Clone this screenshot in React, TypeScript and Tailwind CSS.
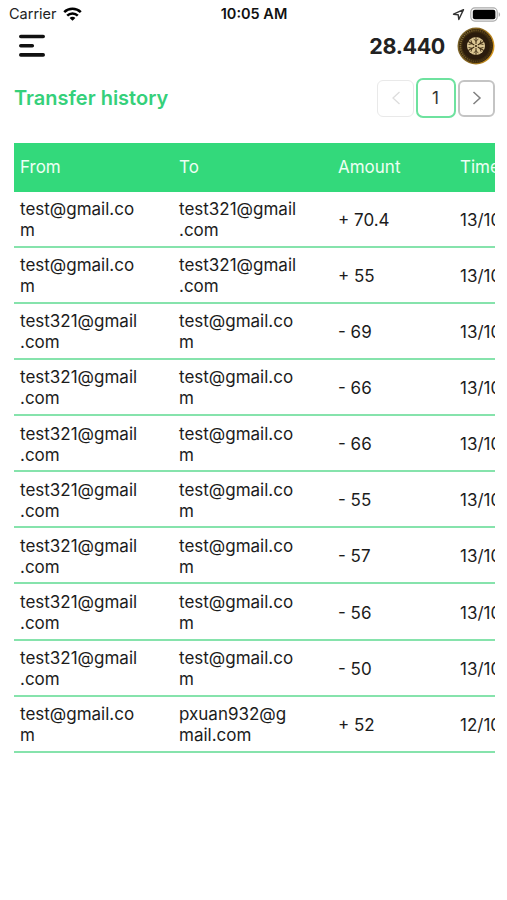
type Transfer = {
  from: string;
  to: string;
  amount: string;
  time: string;
};

const A = "test@gmail.com";
const B = "test321@gmail.com";

const transfers: Transfer[] = [
  { from: A, to: B, amount: "+ 70.4", time: "13/10" },
  { from: A, to: B, amount: "+ 55", time: "13/10" },
  { from: B, to: A, amount: "- 69", time: "13/10" },
  { from: B, to: A, amount: "- 66", time: "13/10" },
  { from: B, to: A, amount: "- 66", time: "13/10" },
  { from: B, to: A, amount: "- 55", time: "13/10" },
  { from: B, to: A, amount: "- 57", time: "13/10" },
  { from: B, to: A, amount: "- 56", time: "13/10" },
  { from: B, to: A, amount: "- 50", time: "13/10" },
  { from: A, to: "pxuan932@gmail.com", amount: "+ 52", time: "12/10" },
];

function StatusBar() {
  return (
    <div className="grid h-7 grid-cols-3 items-center pl-[9px] pr-[6px] text-[14.5px] leading-none">
      <div className="flex items-center gap-[6px]">
        <span className="text-[#222]">Carrier</span>
        <svg width="19" height="14" viewBox="0 0 19 14" fill="none" stroke="#000" strokeWidth="2.5">
          <path d="M1.2 5.2a11.8 11.8 0 0 1 16.6 0" />
          <path d="M4.2 8.6a7.5 7.5 0 0 1 10.6 0" />
          <path d="M9.5 13.8 6.6 10.9a4 4 0 0 1 5.8 0Z" fill="#000" stroke="none" />
        </svg>
      </div>
      <div className="pr-[2px] text-center font-semibold text-[#111]">10:05 AM</div>
      <div className="flex items-center justify-end gap-[5px]">
        <svg width="13" height="13" viewBox="0 0 13 13" fill="none" stroke="#333" strokeWidth="1.4" strokeLinejoin="round">
          <path d="M11.5 1.6 1.5 6.2l4.7.6.6 4.7Z" />
        </svg>
        <svg width="31" height="15" viewBox="0 0 31 15">
          <rect x="0.8" y="0.9" width="26.4" height="13.2" rx="4" fill="#fff" stroke="#aaa" strokeWidth="1.2" />
          <rect x="2.8" y="2.8" width="22.6" height="9.4" rx="2" fill="#000" />
          <path d="M28.7 5.2v4.6c1.8-.7 1.8-3.9 0-4.6Z" fill="#aaa" />
        </svg>
      </div>
    </div>
  );
}

function Coin() {
  const spokes = [0, 60, 120, 180, 240, 300];
  return (
    <svg width="38" height="38" viewBox="0 0 38 38">
      <defs>
        <linearGradient id="rim" x1="0" y1="0.3" x2="1" y2="0.6">
          <stop offset="0" stopColor="#75602a" />
          <stop offset="0.55" stopColor="#8a651c" />
          <stop offset="1" stopColor="#d99a20" />
        </linearGradient>
        <linearGradient id="ticks" x1="0" y1="0.3" x2="1" y2="0.6">
          <stop offset="0" stopColor="#8a7437" />
          <stop offset="0.6" stopColor="#5a4218" />
          <stop offset="1" stopColor="#4a3212" />
        </linearGradient>
      </defs>
      <circle cx="19" cy="19" r="18.5" fill="url(#rim)" />
      <circle cx="19" cy="19" r="17" fill="#3a290f" />
      <circle cx="19" cy="19" r="15.6" fill="none" stroke="url(#ticks)" strokeWidth="1.6" strokeDasharray="1.2 1" />
      <circle cx="19" cy="19" r="13.6" fill="#2a1b0c" />
      <circle cx="19" cy="19" r="9" fill="#dcc793" />
      {spokes.map((deg) => (
        <g key={deg} transform={`rotate(${deg} 19 19)`} stroke="#3a2810" fill="none">
          <path d="M19 17v-7" strokeWidth="1" />
          <path d="m16.6 11.8 2.4 2.6 2.4-2.6" strokeWidth="0.8" />
        </g>
      ))}
      <circle cx="19" cy="19" r="1.1" fill="#3a2810" />
    </svg>
  );
}

function Header() {
  return (
    <div className="flex h-9 items-center justify-between pl-[18px] pr-3">
      <svg width="28" height="24" viewBox="0 0 28 24" stroke="#111" strokeWidth="3.6" strokeLinecap="round">
        <path d="M2.8 2.5h22.4M2.8 11.7h11.5M2.8 20.9h22.4" />
      </svg>
      <div className="flex items-center gap-[12px]">
        <span className="text-[21.5px] font-bold tracking-[-0.35px] text-[#222]">28.440</span>
        <Coin />
      </div>
    </div>
  );
}

function Pagination() {
  return (
    <div className="flex items-center gap-[2px]">
      <button className="flex h-[37px] w-[37px] items-center justify-center rounded-md border border-[#e9e9e9]">
        <svg width="10" height="16" viewBox="0 0 10 16" fill="none" stroke="#ddd" strokeWidth="1.3">
          <path d="M8.5 2 2 8l6.5 6" />
        </svg>
      </button>
      <button className="flex h-10 w-10 items-center justify-center rounded-[7px] border-2 border-[#6ee29f] pr-[1px] pt-[2px] text-[17px] text-[#333]">
        1
      </button>
      <button className="flex h-[37px] w-[37px] items-center justify-center rounded-md border-2 border-[#c4c4c4]">
        <svg width="10" height="16" viewBox="0 0 10 16" fill="none" stroke="#808080" strokeWidth="1.5">
          <path d="M1.5 2 8 8l-6.5 6" />
        </svg>
      </button>
    </div>
  );
}

export default function App() {
  return (
    <div className="h-[900px] w-[507px] overflow-hidden bg-white font-['Inter',sans-serif] text-[#1c1c1c]">
      <StatusBar />
      <Header />

      <div className="mt-[13px] flex h-[42px] items-center justify-between pl-[14px] pr-3">
        <h1 className="text-[20px] font-semibold text-[#35d07a]">Transfer history</h1>
        <Pagination />
      </div>

      {/* the time column runs past the right edge of the table */}
      <div className="ml-[14px] mt-[24px] w-[481px] overflow-hidden text-[17px] leading-[21px]">
        <div className="grid h-[48.5px] w-[640px] grid-cols-[159px_159px_122px_200px] items-center bg-[#33d97b] text-[#ecfff3]">
          <div className="pl-[6px]">From</div>
          <div className="pl-[6px]">To</div>
          <div className="pl-[6px]">Amount</div>
          <div className="pl-[6px]">Time</div>
        </div>
        {transfers.map((t, i) => (
          <div
            key={i}
            className="grid h-[56.15px] w-[640px] grid-cols-[159px_159px_122px_200px] items-center border-b-2 border-[#86e3ac] pt-[3px]"
          >
            <div className="ml-[6px] w-[122px] [line-break:anywhere]">{t.from}</div>
            <div className="ml-[6px] w-[122px] [line-break:anywhere]">{t.to}</div>
            <div className="pl-[6px]">{t.amount}</div>
            <div className="pl-[6px]">{t.time}</div>
          </div>
        ))}
      </div>
    </div>
  );
}
